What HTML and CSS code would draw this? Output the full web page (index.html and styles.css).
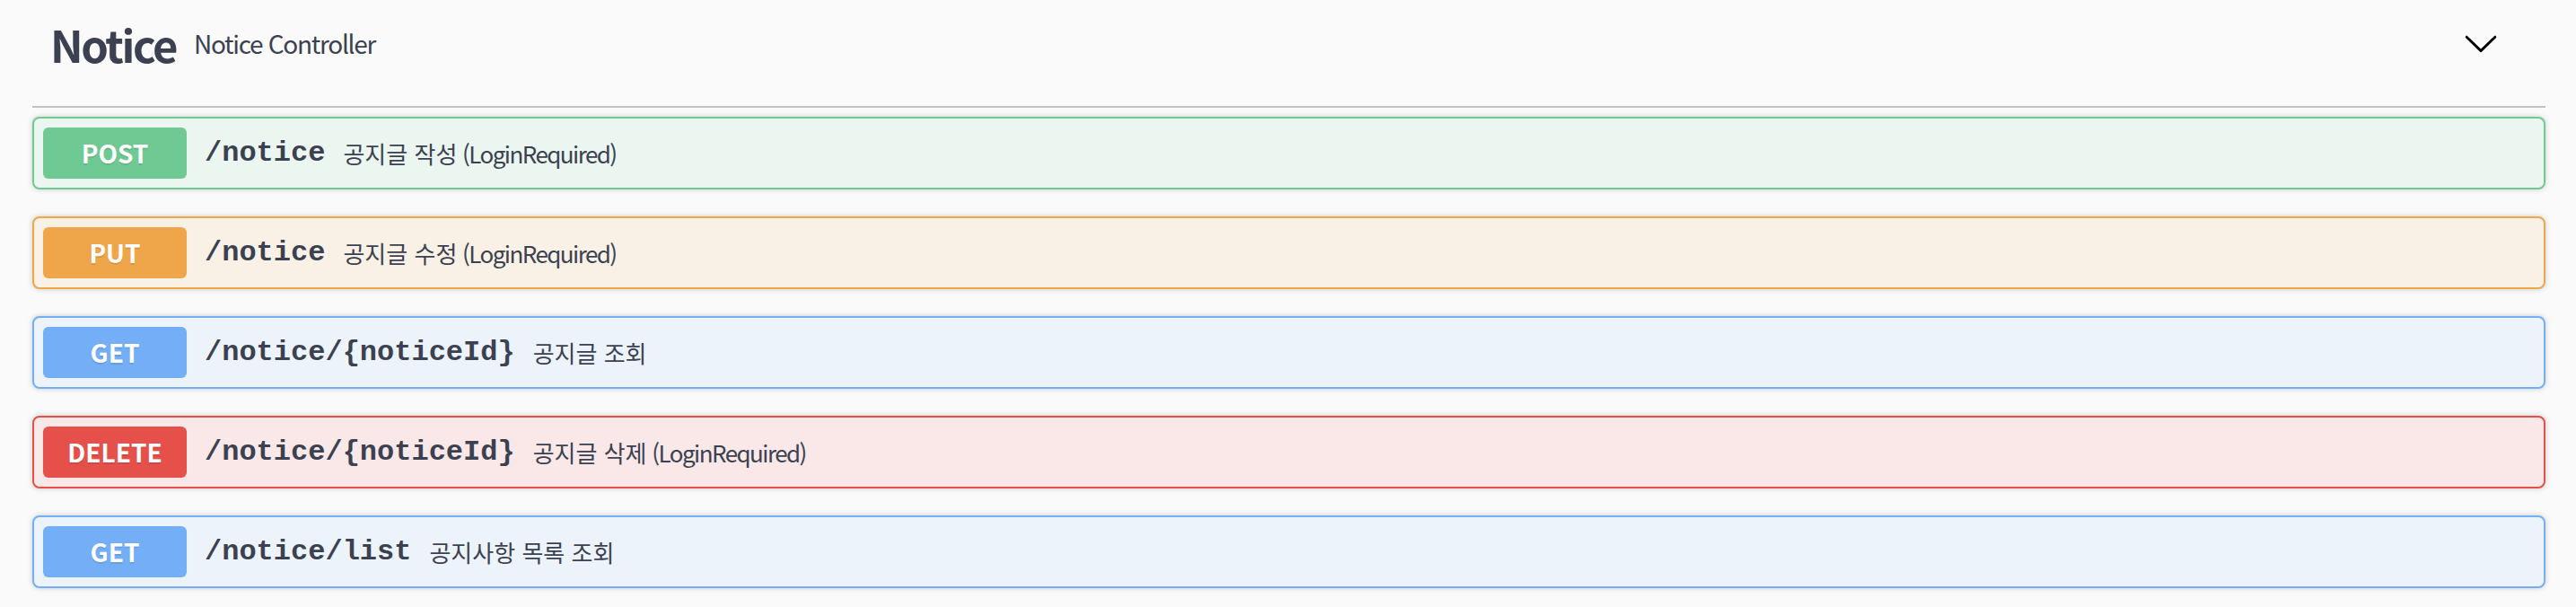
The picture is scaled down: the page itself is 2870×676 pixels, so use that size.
FILE: index.html
```html
<!DOCTYPE html>
<html lang="ko">
<head>
<meta charset="utf-8">
<title>Notice</title>
<link rel="stylesheet" href="styles.css">
</head>
<body>
<div class="wrapper">
  <div class="tag">
    <h3 class="tag-title">Notice</h3>
    <small class="tag-desc">Notice Controller</small>
    <svg class="arrow" width="40" height="40" viewBox="0 0 20 20" aria-hidden="true">
      <path d="M17.418 6.109c.272-.268.709-.268.979 0s.271.701 0 .969l-7.908 7.83c-.27.268-.707.268-.979 0l-7.908-7.83c-.27-.268-.27-.701 0-.969.271-.268.709-.268.979 0L10 13.25l7.418-7.141z"/>
    </svg>
  </div>
  <div class="ops">
    <div class="opblock post">
      <div class="summary">
        <span class="method">POST</span>
        <span class="path">/notice</span>
        <span class="desc">공지글 작성<span class="latin"> (LoginRequired)</span></span>
      </div>
    </div>
    <div class="opblock put">
      <div class="summary">
        <span class="method">PUT</span>
        <span class="path">/notice</span>
        <span class="desc">공지글 수정<span class="latin"> (LoginRequired)</span></span>
      </div>
    </div>
    <div class="opblock get">
      <div class="summary">
        <span class="method">GET</span>
        <span class="path">/notice/{noticeId}</span>
        <span class="desc">공지글 조회</span>
      </div>
    </div>
    <div class="opblock delete">
      <div class="summary">
        <span class="method">DELETE</span>
        <span class="path">/notice/{noticeId}</span>
        <span class="desc">공지글 삭제<span class="latin"> (LoginRequired)</span></span>
      </div>
    </div>
    <div class="opblock get">
      <div class="summary">
        <span class="method">GET</span>
        <span class="path">/notice/list</span>
        <span class="desc">공지사항 목록 조회</span>
      </div>
    </div>
  </div>
</div>
</body>
</html>
```
FILE: styles.css
```css
html, body {
  margin: 0;
  padding: 0;
  background: #fafafa;
}
body {
  font-family: "Noto Sans CJK KR", "Noto Sans", sans-serif;
  color: #3b4151;
}
.wrapper {
  padding: 0 34px 0 36px;
}
.tag {
  display: flex;
  align-items: center;
  height: 80px;
  padding: 8px 52px 30px 20px;
  border-bottom: 2px solid rgba(59, 65, 81, 0.3);
}
.tag-title {
  margin: 0;
  font-size: 49px;
  font-weight: 700;
  line-height: 1;
  letter-spacing: -2.4px;
}
.tag-desc {
  flex: 1;
  font-size: 28px;
  padding: 0 20px;
  line-height: 1;
  letter-spacing: -1.3px;
}
.arrow {
  display: block;
  fill: #000;
}
.ops {
  padding-top: 10px;
}
.opblock {
  margin-bottom: 30px;
  border: 2px solid;
  border-radius: 8px;
  box-shadow: 0 0 6px rgba(0, 0, 0, 0.19);
}
.summary {
  display: flex;
  align-items: center;
  padding: 10px;
}
.method {
  min-width: 160px;
  padding: 12px 0;
  line-height: 33px;
  font-size: 28px;
  font-weight: 700;
  text-align: center;
  color: #fff;
  border-radius: 6px;
  text-shadow: 0 2px 0 rgba(0, 0, 0, 0.1);
}
.path {
  font-family: "Liberation Mono", "DejaVu Sans Mono", monospace;
  font-size: 32px;
  font-weight: 700;
  padding: 0 20px;
  color: #3b4151;
}
.desc {
  font-size: 26px;
  color: #3b4151;
}
.latin {
  letter-spacing: -1.55px;
}
.post { border-color: #6fc992; background: #ebf6f0; }
.post .method { background: #6fc992; }
.put { border-color: #efa64b; background: #faf1e6; }
.put .method { background: #efa64b; }
.get { border-color: #73aef7; background: #ecf3fb; }
.get .method { background: #73aef7; }
.delete { border-color: #e5504b; background: #f9e8e7; }
.delete .method { background: #e5504b; }
```
